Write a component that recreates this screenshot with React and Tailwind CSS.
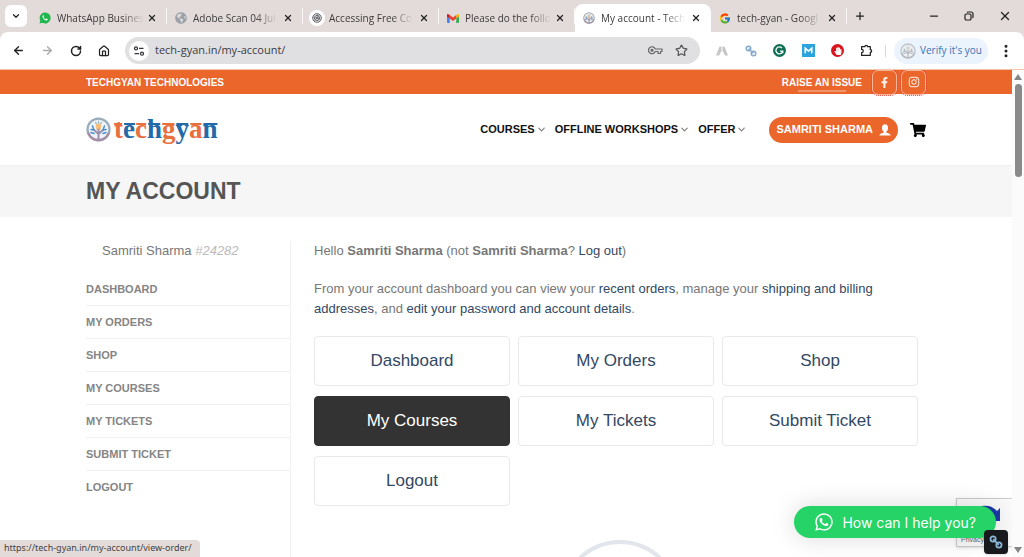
import React from 'react';
import {
  ArrowLeft, ArrowRight, ChevronDown, EllipsisVertical, House,
  Minus, Plus, RotateCw, Star, X,
} from 'lucide-react';
import { FaFacebookF, FaHandPaper, FaInstagram, FaShoppingCart, FaWhatsapp, FaGlobeAmericas } from 'react-icons/fa';
import { FcGoogle } from 'react-icons/fc';

// ─── Icons ───────────────────────
const WhatsAppMark = () => (
  <svg viewBox="0 0 24 24" className="size-3">
    <path d="M1 23l1.6-5.8A11 11 0 1 1 7 21.6z" fill="#1fb64d" />
    <path d="M8 6.5c-1 .8-1.5 2.5-.6 4.5 1.2 2.7 3.5 5 6.3 6 1.6.5 3.1 0 3.7-1.3l.1-1.5-2.7-1.4-1.5 1.6c-2-.8-3.4-2.2-4.3-4.1l1.2-1.5L9.1 6.2z" fill="#fff" />
  </svg>
);

const GmailMark = () => (
  <svg viewBox="0 0 24 18" className="w-3">
    <path d="M0 2v14a2 2 0 0 0 2 2h3.5V8z" fill="#4285f4" />
    <path d="M24 2v14a2 2 0 0 1-2 2h-3.5V8z" fill="#34a853" />
    <path d="M18.5 2.2 21 .6C22.4-.4 24 .6 24 2.2V5l-5.5 4z" fill="#fbbc04" />
    <path d="M5.5 2.2 3 .6C1.6-.4 0 .6 0 2.2V5l5.5 4z" fill="#c5221f" />
    <path d="M5.5 2.2 12 7l6.5-4.8V9L12 14 5.5 9z" fill="#ea4335" />
  </svg>
);

const SpiralMark = () => (
  <span className="size-4 -mx-0.5 shrink-0 rounded-full bg-white flex items-center justify-center">
    <svg viewBox="0 0 20 20" className="size-[10px]" fill="none" stroke="#55565c" strokeWidth="2">
      <circle cx="10" cy="10" r="8.5" />
      <circle cx="10" cy="10" r="5" />
      <circle cx="10" cy="10" r="1.5" />
      <path d="M10 1.5 14 14M2 8l14 4M4 16 15 4" strokeWidth=".8" />
    </svg>
  </span>
);

const TreeMark = ({ className }) => (
  <svg viewBox="0 0 50 50" className={className} fill="none" strokeLinecap="round">
    <circle cx="25" cy="25" r="22" fill="#eef3f7" stroke="#9aabba" strokeWidth="4.5" />
    <path d="M5 33a22 22 0 0 0 40 0" stroke="#a98ba4" strokeWidth="4.5" />
    <path d="M25 45V25M25 34l-9-8M25 34l9-8" stroke="#9b91ae" strokeWidth="4" />
    <path d="M16 26l-6-1M16 26l-3-8M34 26l6-1M34 26l3-8M16 33l-6-2M34 33l6-2" stroke="#4b8fca" strokeWidth="3" />
    <path d="M19 11l3 4M31 11l-3 4M25 8v4" stroke="#90b9d8" strokeWidth="2.5" />
    <circle cx="25" cy="18" r="5.5" fill="#f5bd78" />
    <path d="M22 24h6" stroke="#e7a35d" strokeWidth="3" />
  </svg>
);

const SiteInfoIcon = () => (
  <svg viewBox="0 0 16 16" className="size-3" fill="none" stroke="#33343a" strokeWidth="1.7">
    <circle cx="4" cy="4.5" r="2" />
    <path d="M8 4.5h6M2 11.5h6" />
    <circle cx="12" cy="11.5" r="2" />
  </svg>
);

const KeyIcon = () => (
  <svg viewBox="0 0 30 18" className="w-[15px]" fill="none" stroke="#66676b" strokeWidth="2.4">
    <path d="M14.5 6H28v5h-3v4h-5v-4h-5.5A7 7 0 1 1 14.5 6z" strokeLinejoin="round" />
    <circle cx="8" cy="8.5" r="2" fill="#66676b" />
  </svg>
);

const ChainIcon = ({ className }) => (
  <svg viewBox="0 0 24 24" className={className} fill="none" stroke="currentColor" strokeWidth="3">
    <circle cx="7" cy="7" r="4.5" />
    <circle cx="17" cy="17" r="4.5" />
    <path d="M8 8l8 8" strokeLinecap="round" />
  </svg>
);

const RoadIcon = () => (
  <svg viewBox="0 0 24 24" className="size-3" fill="#c6c6c6">
    <path d="M7 3h4v9l-5 9H0zM13 3h4l7 18h-6l-5-9z" />
  </svg>
);

const GrammarIcon = () => (
  <svg viewBox="0 0 24 24" className="size-[13px]" fill="none" stroke="#fff" strokeWidth="2.4">
    <circle cx="12" cy="12" r="12" fill="#0e6f55" stroke="none" />
    <path d="M16.5 7.5a6.4 6.4 0 1 0 1.5 5.5h-5M18 13v4" />
  </svg>
);

const MailIcon = () => (
  <svg viewBox="0 0 24 24" className="size-[13px]">
    <path d="M0 0h24v24H0z" fill="#2ba3dc" />
    <path d="M6 17V8l6 5 6-5v9" fill="none" stroke="#fff" strokeWidth="3" />
  </svg>
);

const BlockIcon = () => (
  <span className="size-[13px] rounded-full bg-[#d9151b] flex items-center justify-center">
    <FaHandPaper className="size-2 text-white" />
  </span>
);

const PuzzleIcon = () => (
  <svg viewBox="0 0 24 24" className="size-[15px]" fill="none" stroke="#222" strokeWidth="2.3" strokeLinejoin="round">
    <path d="M3 5h6a2.5 2.5 0 0 1 5 0h5v5.5a2.5 2.5 0 0 1 0 5V21H3v-5a3 3 0 0 0 0-6z" />
  </svg>
);

const RestoreIcon = () => (
  <svg viewBox="0 0 20 20" className="size-[10px]" fill="none" stroke="#222" strokeWidth="2.4">
    <rect x="2" y="6" width="12" height="12" rx="2.5" />
    <path d="M6 3a4 4 0 0 1 2-1h6a4 4 0 0 1 4 4v6a4 4 0 0 1-1 2" />
  </svg>
);

const PersonIcon = () => (
  <svg viewBox="0 0 24 24" className="size-3" fill="#fff">
    <ellipse cx="12" cy="8" rx="6" ry="7.5" />
    <path d="M9.5 13h5v4c3 1 8 2 9 6H.5c1-4 6-5 9-6z" />
  </svg>
);

const SmallCaret = () => <ChevronDown className="size-[11px] text-[#777]" strokeWidth={2.2} />;

// ─── Data ───────────────────────
const TABS = [
  { title: 'WhatsApp Busines', icon: <WhatsAppMark /> },
  { title: 'Adobe Scan 04 Jul', icon: <FaGlobeAmericas className="size-3 text-[#9aa0a8]" /> },
  { title: 'Accessing Free Co', icon: <SpiralMark /> },
  { title: 'Please do the follo', icon: <GmailMark /> },
  { title: 'My account - Tech', icon: <TreeMark className="size-3 grayscale-50" />, active: true },
  { title: 'tech-gyan - Googl', icon: <FcGoogle className="size-[13px]" /> },
];

const EXTENSIONS = [
  { name: 'Road', icon: <RoadIcon /> },
  { name: 'Link', icon: <ChainIcon className="size-3 text-[#85a9cb]" /> },
  { name: 'Grammar', icon: <GrammarIcon /> },
  { name: 'Mail', icon: <MailIcon /> },
  { name: 'Blocker', icon: <BlockIcon /> },
  { name: 'Extensions', icon: <PuzzleIcon /> },
];

const NAV = ['Courses', 'Offline Workshops', 'Offer'];

const SOCIAL = [
  { name: 'Facebook', icon: <FaFacebookF className="size-[11px]" /> },
  { name: 'Instagram', icon: <FaInstagram className="size-3" /> },
];

const ACCOUNT_LINKS = ['Dashboard', 'My Orders', 'Shop', 'My Courses', 'My Tickets', 'Submit Ticket', 'Logout'];

const LOGO = ['t', 'e', 'c', 'h', 'g', 'y', 'a', 'n'];

// ─── Browser chrome ───────────────────────
function TabStrip() {
  return (
    <div className="h-8 shrink-0 flex items-center bg-[#e3dbd9] pl-[5px] text-[#222]">
      <button aria-label="Search tabs" className="size-[22px] rounded-md bg-white flex items-center justify-center">
        <ChevronDown className="size-[10px]" strokeWidth={3} />
      </button>
      <div className="flex self-stretch ml-1 min-w-0" role="tablist">
        {TABS.map((tab) => (
          <div
            key={tab.title}
            className={
              tab.active
                ? 'w-[136px] h-7 mt-1 px-2 flex items-center min-w-0 bg-white rounded-t-lg'
                : 'w-[136px] h-7 mt-1 px-2 flex items-center min-w-0 relative'
            }
          >
            <button role="tab" aria-selected={!!tab.active} className="flex flex-1 items-center gap-1.5 min-w-0 text-left">
              <span className="w-3 flex shrink-0 justify-center">{tab.icon}</span>
              <span className="flex-1 whitespace-nowrap text-[10px] leading-4 text-[#3c3a3a] mask-r-from-75% mask-r-to-100%">
                {tab.title}
              </span>
            </button>
            <button aria-label={'Close ' + tab.title} className="ml-1 p-0.5">
              <X className="size-[10px]" strokeWidth={3} />
            </button>
            {!tab.active && <span className="absolute right-0 top-1 h-4 w-px bg-white/80" />}
          </div>
        ))}
      </div>
      <button aria-label="New tab" className="ml-[7px]">
        <Plus className="size-3" strokeWidth={2.5} />
      </button>
      <div className="ml-auto flex items-center gap-6 pr-3">
        <button aria-label="Minimize"><Minus className="size-3" strokeWidth={2.5} /></button>
        <button aria-label="Restore"><RestoreIcon /></button>
        <button aria-label="Close"><X className="size-[14px]" strokeWidth={2.2} /></button>
      </div>
    </div>
  );
}

function Toolbar() {
  return (
    <div className="bg-[#e3dbd9] shrink-0">
      <div className="h-[38px] flex items-center bg-white rounded-t-lg pl-3 pr-2.5 border-b border-[#f3c6aa] text-[#222]">
        <div className="flex items-center gap-4">
          <button aria-label="Back"><ArrowLeft className="size-[13px]" strokeWidth={2.5} /></button>
          <button aria-label="Forward"><ArrowRight className="size-[13px] text-[#aaa]" strokeWidth={2.5} /></button>
          <button aria-label="Reload"><RotateCw className="size-3" strokeWidth={3} /></button>
          <button aria-label="Home"><House className="size-3" strokeWidth={2.5} /></button>
        </div>
        <div className="ml-[15px] h-[27px] flex-1 flex items-center rounded-full bg-[#e0dfe2] pl-1 pr-3 gap-3">
          <button aria-label="Site information" className="size-5 rounded-full bg-white flex items-center justify-center">
            <SiteInfoIcon />
          </button>
          <input
            aria-label="Address"
            defaultValue="tech-gyan.in/my-account/"
            className="flex-1 min-w-0 -ml-1.5 bg-transparent text-[11px] text-[#3c3c40] outline-none"
          />
          <button aria-label="Passwords"><KeyIcon /></button>
          <button aria-label="Bookmark"><Star className="size-[13px] text-[#555]" strokeWidth={2.2} /></button>
        </div>
        <div className="flex items-center gap-4 ml-[15px]">
          {EXTENSIONS.map((ext) => (
            <button key={ext.name} aria-label={ext.name} className="w-[13px] flex justify-center">{ext.icon}</button>
          ))}
        </div>
        <span className="w-px h-3 bg-[#d8d8d8] ml-3 mr-2" />
        <button className="h-[26px] rounded-full bg-[#ebf3fc] flex items-center gap-1 px-1.5 text-[10px] text-[#3a74b8]">
          <TreeMark className="size-4 grayscale-75 opacity-60" />
          Verify it's you
        </button>
        <button aria-label="Menu" className="ml-2.5"><EllipsisVertical className="size-4" strokeWidth={2.5} /></button>
      </div>
    </div>
  );
}

// ─── Site ───────────────────────
function Logo() {
  return (
    <a href="#home" className="flex items-center gap-[3px]">
      <TreeMark className="size-[25px]" />
      <span className="relative font-['Liberation_Serif',serif] font-bold text-[27px] leading-7 pb-0.5">
        {LOGO.map((letter, idx) => (
          <span key={idx} className={idx % 2 ? 'text-[#2469a8]' : 'text-[#e8703f]'}>{letter}</span>
        ))}
        {/* head line that runs over the letters */}
        <svg viewBox="0 0 103 4" className="absolute left-0 top-[7px] w-full" strokeWidth="2">
          <path d="M0 2h8M22 2h10M48 2h12M76 2h11" stroke="#e8703f" />
          <path d="M10 2h11M34 2h12M62 2h12M89 2h14" stroke="#2469a8" />
        </svg>
      </span>
    </a>
  );
}

function SiteHeader() {
  return (
    <header>
      <div className="h-6 bg-[#ea662b] text-white font-bold text-[10px]">
        <div className="max-w-[840px] mx-auto h-full flex items-center justify-between">
          <span>TECHGYAN TECHNOLOGIES</span>
          <div className="flex items-center gap-2.5 h-full">
            <a href="#issue" className="relative h-full flex items-center">
              RAISE AN ISSUE
              <span className="absolute bottom-0.5 left-4 w-12 h-0.5 bg-white/30" />
            </a>
            <div className="flex gap-1">
              {SOCIAL.map((item) => (
                <a
                  key={item.name}
                  href="#social"
                  aria-label={item.name}
                  className="size-[25px] rounded-md border border-[#f6b49b] outline-1 outline-dotted outline-[#e2433b] flex items-center justify-center text-[#fff0e8]"
                >
                  {item.icon}
                </a>
              ))}
            </div>
          </div>
        </div>
      </div>
      <div className="max-w-[840px] mx-auto h-[71px] flex items-center justify-between">
        <Logo />
        <div className="flex items-center gap-3 text-[11px] font-bold text-[#111] uppercase">
          <nav className="flex items-center gap-2 mr-2.5">
            {NAV.map((item) => (
              <a key={item} href="#nav" className="flex items-center gap-px">
                {item}
                <SmallCaret />
              </a>
            ))}
          </nav>
          <a href="#account" className="h-[26px] rounded-full bg-[#ea662b] text-white flex items-center gap-1.5 px-[7px]">
            Samriti Sharma
            <PersonIcon />
          </a>
          <a href="#cart" aria-label="Cart"><FaShoppingCart className="size-4 text-black" /></a>
        </div>
      </div>
      <div className="h-[52px] bg-[#f6f6f6] border-t border-[#f0f0f0]">
        <div className="max-w-[840px] mx-auto h-full flex items-center">
          <h1 className="text-[23px] font-bold text-[#555]">MY ACCOUNT</h1>
        </div>
      </div>
    </header>
  );
}

function Sidebar() {
  return (
    <aside className="w-[205px] shrink-0 border-r border-[#f0f0f0]">
      <p className="h-8 pl-4 leading-5 text-[13px] text-[#777]">
        Samriti Sharma <em className="text-[#bbb]">#24282</em>
      </p>
      <ul className="divide-y divide-[#f0f0f0]">
        {ACCOUNT_LINKS.map((item) => (
          <li key={item} className="h-[33px] flex items-center">
            <a href="#side" className="uppercase font-bold text-[11px] text-[#858585]">{item}</a>
          </li>
        ))}
      </ul>
    </aside>
  );
}

function Link({ children }) {
  return <a href="#link" className="text-[#334862]">{children}</a>;
}

function Dashboard() {
  return (
    <section className="flex-1 pl-[23px] text-[13px] leading-5 text-[#777]">
      <p className="mb-[18px]">
        Hello <strong>Samriti Sharma</strong> (not <strong>Samriti Sharma</strong>? <Link>Log out</Link>)
      </p>
      <p className="mb-[17px] pr-8">
        From your account dashboard you can view your <Link>recent orders</Link>, manage your{' '}
        <Link>shipping and billing addresses</Link>, and <Link>edit your password and account details</Link>.
      </p>
      <div className="grid grid-cols-3 gap-x-2 gap-y-2.5 pr-2">
        {ACCOUNT_LINKS.map((item) => (
          <a
            key={item}
            href="#card"
            className={
              item === 'My Courses'
                ? 'h-[50px] flex items-center justify-center rounded border border-[#333] bg-[#333] text-white text-[17px]'
                : 'h-[50px] flex items-center justify-center rounded border border-[#e9e9e9] text-[#334862] text-[17px]'
            }
          >
            {item}
          </a>
        ))}
      </div>
      <div className="mt-[34px] mx-auto size-[120px] rounded-full border-4 border-[#e2e6ec]" />
    </section>
  );
}

function Scrollbar() {
  return (
    <div className="w-3 shrink-0 bg-[#fbfbfb] flex flex-col items-center py-1">
      <svg viewBox="0 0 8 6" className="w-2"><path d="M4 0l4 6H0z" fill="#858585" /></svg>
      <div className="mt-1 w-[7px] h-[93px] rounded-full bg-[#8a8a8a]" />
      <svg viewBox="0 0 8 6" className="w-2 mt-auto"><path d="M4 6l4-6H0z" fill="#858585" /></svg>
    </div>
  );
}

function FloatingWidgets() {
  return (
    <>
      <div className="absolute right-0 bottom-2.5 w-14 h-[49px] bg-[#f9f9f9] border border-r-0 border-[#ccc] shadow-sm">
        <svg viewBox="0 0 28 20" className="absolute left-4 top-1.5 w-7">
          <path d="M0 1h12v8H6z" fill="#4a90e2" />
          <path d="M9 1c7-1 11 1 15 5l3-3v13H15l4-4c-3-4-6-5-10-5z" fill="#1c3aa9" />
        </svg>
        <span className="absolute left-1 bottom-0 text-[7px] leading-3 text-[#666]">Privacy</span>
      </div>
      <button className="absolute right-4 bottom-[19px] h-8 px-5 rounded-full bg-[#25d366] text-white flex items-center gap-2 font-['Inter',sans-serif] text-[14px] shadow-[0_0_24px_rgba(0,0,0,0.15)]">
        <FaWhatsapp className="size-5" />
        How can I help you?
      </button>
      <button aria-label="Link tool" className="absolute right-1 bottom-[3px] size-6 rounded bg-[#17191d] flex items-center justify-center shadow">
        <ChainIcon className="size-3.5 text-[#8ab6d8]" />
      </button>
      <div className="absolute left-0 bottom-0 h-[17px] pl-1 pr-2 rounded-tr bg-[#e3dbd9] text-[9px] leading-4 text-[#444] font-['Noto_Sans',sans-serif]">
        https://tech-gyan.in/my-account/view-order/
      </div>
    </>
  );
}

export default function App() {
  return (
    <div className="h-screen flex flex-col overflow-hidden bg-white font-['Open_Sans',sans-serif]">
      <TabStrip />
      <Toolbar />
      <div className="flex-1 min-h-0 flex">
        <div className="flex-1 min-w-0 relative overflow-hidden font-['Liberation_Sans',sans-serif]">
          <SiteHeader />
          <main className="max-w-[840px] mx-auto pt-6 flex">
            <Sidebar />
            <Dashboard />
          </main>
          <FloatingWidgets />
        </div>
        <Scrollbar />
      </div>
    </div>
  );
}
